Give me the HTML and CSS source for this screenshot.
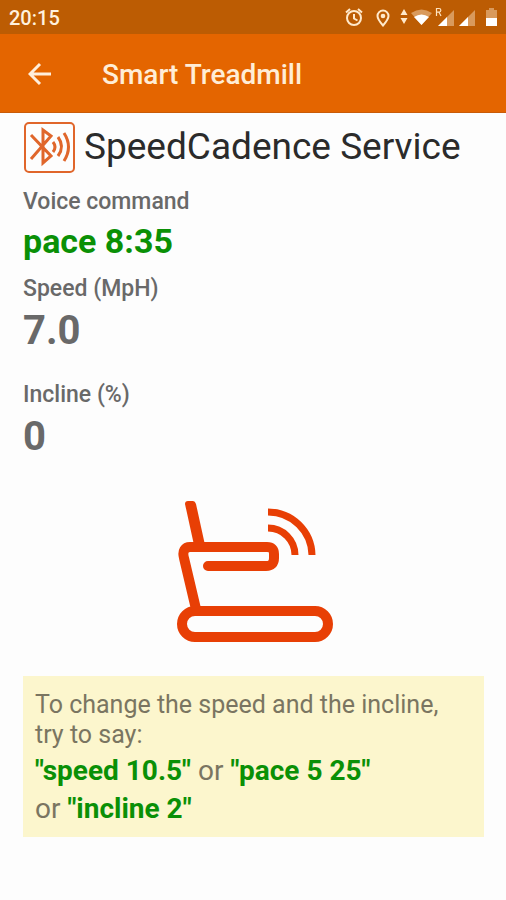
FILE: index.html
```html
<!DOCTYPE html>
<html lang="en">
<head>
<meta charset="utf-8">
<meta name="viewport" content="width=device-width, initial-scale=1">
<title>Smart Treadmill</title>
<link rel="stylesheet" href="styles.css">
</head>
<body>
<div class="status-bar">
  <time class="clock">20:15</time>
  <svg class="status-icons" width="156" height="24" viewBox="0 0 156 24" aria-hidden="true">
    <g fill="none" stroke="#ffe9cb" stroke-width="2">
      <circle cx="10" cy="12" r="7"/>
      <path d="M10 8v4.500l3.500 2M2 6.500l4-3.500M18 6.500l-4-3.500"/>
      <path d="M39 19.500c-3.500-4-5.500-6.500-5.500-9.500a5.500 5.500 0 0 1 11 0c0 3-2 5.500-5.500 9.500z"/>
    </g>
    <g fill="#ffe9cb">
      <circle cx="39" cy="10" r="2.300"/>
      <path d="M56.500 9l3.500-6 3.500 6zM56.500 12h7l-3.500 6z"/>
    </g>
    <path fill="#d99a5c" d="M67 7q10.500-7 21 0L77.500 19z"/>
    <path fill="#fff" d="M70 11q7.500-5 15 0l-7.500 8z"/>
    <path fill="#d99a5c" d="M94 20L110 4v16zM115 20L131 4v16z"/>
    <path fill="#fff" d="M94 20l9-9v9zM115 20l9-9v9z"/>
    <path fill="none" stroke="#ffe3bf" stroke-width="1.200" d="M92.500 10V2.500h2.500a1.800 1.800 0 0 1 0 3.700h-2.500M95 6.200l2 3.800"/>
    <path fill="#d99a5c" d="M142 4h3V2h5v2h3v8h-11z"/>
    <path fill="#fff" d="M142 12h11v8h-11z"/>
  </svg>
</div>
<header class="app-bar">
  <button class="back" type="button" aria-label="Back">
    <svg width="24" height="24" viewBox="0 0 24 24" aria-hidden="true"><path d="M23 12H2M12 2L2 12l10 10"/></svg>
  </button>
  <h1 class="app-title">Smart Treadmill</h1>
</header>
<main class="content">
  <div class="service">
    <svg class="service-icon" width="52" height="52" viewBox="0 0 52 52" aria-hidden="true">
      <rect class="outline" x="2" y="2" width="49" height="49" rx="4"/>
      <path d="M8 14l20 21-8 7V9l8 6L8 38"/>
      <path d="M30 21q4 5 0 10M35 16q7 9.500 0 19M41 12q9 14 0 28"/>
    </svg>
    <h2 class="service-name">SpeedCadence Service</h2>
  </div>
  <dl class="readings">
    <div class="reading">
      <dt>Voice command</dt>
      <dd class="command">pace 8:35</dd>
    </div>
    <div class="reading">
      <dt>Speed (MpH)</dt>
      <dd class="number">7.0</dd>
    </div>
    <div class="reading">
      <dt>Incline (%)</dt>
      <dd class="number">0</dd>
    </div>
  </dl>
  <svg class="treadmill" width="170" height="170" viewBox="0 0 170 170" role="img" aria-label="Connected treadmill">
    <rect class="belt" x="13" y="124" width="146" height="26" rx="13"/>
    <path class="frame" d="M27 122L15 71C13 64 16 60 21 60H98Q105 60 105 67V71Q105 79 97 79H39"/>
    <path class="handle" d="M16 17Q16 14 19 14H24Q26 14 27 17L36 58H25z"/>
    <path class="waves" d="M99 41A27 27 0 0 1 126 68M99 25A44 44 0 0 1 143 68"/>
  </svg>
  <section class="hint">
    <p class="intro">To change the speed and the incline, try to say:</p>
    <p class="phrases"><strong>"speed 10.5"</strong> or <strong>"pace 5 25"</strong><br>or <strong>"incline 2"</strong></p>
  </section>
</main>
</body>
</html>
```
FILE: styles.css
```css
* {
  box-sizing: border-box;
}

body {
  margin: 0;
  background: #fdfdfd;
  color: #696969;
  font-family: Roboto, "Liberation Sans", sans-serif;
}

h1, h2, p, dl, dd {
  margin: 0;
}

.status-bar {
  display: flex;
  align-items: center;
  justify-content: space-between;
  height: 34px;
  padding: 2px 6px 0 9px;
  background: #bc5c03;
}

.clock {
  color: #fff1de;
  font-size: 20px;
  font-weight: 500;
}

.app-bar {
  display: flex;
  align-items: center;
  gap: 50px;
  height: 79px;
  padding: 2px 28px 0;
  background: #e46500;
  border-bottom: 1px solid #c95b08;
}

.back {
  display: flex;
  padding: 0;
  border: 0;
  background: none;
}

.back path {
  fill: none;
  stroke: #ffeedb;
  stroke-width: 3;
}

.app-title {
  color: #ffedd6;
  font-size: 28px;
  font-weight: 500;
}

.content {
  display: flex;
  flex-direction: column;
  padding: 8px 22px 24px 23px;
}

.service {
  display: flex;
  align-items: center;
  gap: 9px;
  margin-bottom: 15px;
}

.service-icon {
  flex: none;
  fill: none;
  stroke: #e0662b;
  stroke-width: 3;
}

.service-icon .outline {
  stroke-width: 2;
}

.service-name {
  color: #2b2b2b;
  font-size: 37px;
  font-weight: 400;
  line-height: 52px;
}

.readings {
  display: flex;
  flex-direction: column;
}

.reading {
  margin-bottom: 22px;
}

.reading:first-child {
  margin-bottom: 9px;
}

dt {
  font-size: 23px;
  font-weight: 500;
  line-height: 28px;
}

.command {
  color: #0a9006;
  font-size: 34px;
  font-weight: 700;
  line-height: 50px;
}

.number {
  font-size: 40px;
  font-weight: 700;
  line-height: 56px;
}

.treadmill {
  align-self: center;
  fill: none;
  stroke: #e83f05;
  stroke-width: 10;
}

.treadmill .frame {
  stroke-linecap: round;
}

.treadmill .handle {
  fill: #e83f05;
  stroke: none;
}

.treadmill .waves {
  stroke-width: 7;
}

.hint {
  margin-top: 19px;
  padding: 14px 12px 9px;
  background: #fcf6cd;
  color: #7a7561;
}

.intro {
  margin-bottom: 2px;
  font-size: 25px;
  line-height: 30px;
}

.phrases {
  font-size: 28px;
  line-height: 38px;
}

.phrases strong {
  color: #0a9006;
  font-weight: 700;
}
```
